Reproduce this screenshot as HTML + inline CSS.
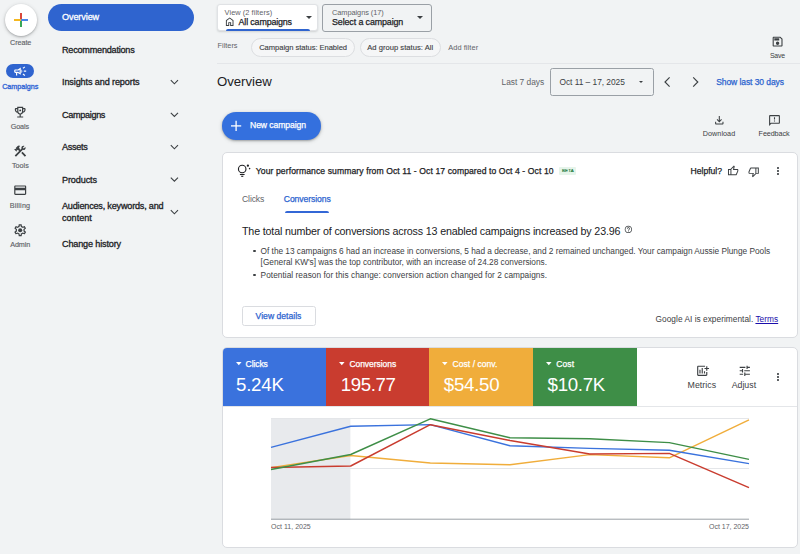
<!DOCTYPE html>
<html><head><meta charset="utf-8">
<style>
*{box-sizing:border-box;margin:0;padding:0}
html,body{width:800px;height:554px;overflow:hidden;background:#f1f3f4;font-family:"Liberation Sans",sans-serif;color:#202124}
body{position:relative}
.abs{position:absolute}
.t{position:absolute;white-space:nowrap;line-height:1}
.m{-webkit-text-stroke:.25px currentColor}
.rl{font-size:7.2px;color:#5f6368;-webkit-text-stroke:.15px #5f6368}
.nav{font-size:9.1px;color:#202124;left:62px;-webkit-text-stroke:.3px currentColor}
svg{position:absolute;overflow:visible}
.ic{fill:#3c4043}
.chip{position:absolute;height:19px;border:1px solid #dcdee1;border-radius:10px;background:#f5f6f7}
.card{position:absolute;background:#fff;border:1px solid #dadce0;border-radius:5px}
.tile{position:absolute;top:348px;height:58px;color:#fff}
.tile .l{position:absolute;top:11.6px;font-size:8.5px;-webkit-text-stroke:.25px #fff;line-height:1;white-space:nowrap}
.tile .v{position:absolute;top:28px;font-size:18.7px;line-height:1;white-space:nowrap}

.car{position:absolute;width:0;height:0;border-left:3px solid transparent;border-right:3px solid transparent;border-top:3px solid #3c4043}
</style></head><body>

<!-- RAIL -->
<div class="abs" style="left:5px;top:3.8px;width:32px;height:32px;border-radius:50%;background:#fff;box-shadow:0 1px 2px rgba(60,64,67,.3),0 1px 4px rgba(60,64,67,.2)"></div>
<svg style="left:13.9px;top:12.7px" width="14" height="14" viewBox="0 0 14 14"><rect x="6" y="0" width="2" height="7" fill="#d9483b"/><rect x="6" y="7" width="2" height="7" fill="#3aa757"/><rect x="0" y="6" width="7" height="2" fill="#f5b820"/><rect x="7" y="6" width="7" height="2" fill="#4a86e8"/></svg>
<div id="r0" class="t rl" style="letter-spacing:-0.046px;left:10px;top:38.5px">Create</div>

<div class="abs" style="left:6.4px;top:64px;width:28px;height:14.4px;border-radius:7.2px;background:#2f64cf"></div>
<svg style="left:13.3px;top:64.2px" width="14.4" height="14.4" viewBox="0 0 24 24"><path fill="#fff" d="M18 11v2h4v-2h-4zm-2 6.61c.96.71 2.21 1.65 3.2 2.39.4-.53.8-1.07 1.2-1.6-.99-.74-2.24-1.68-3.2-2.4-.4.54-.8 1.08-1.2 1.61zM20.400 5.600c-.4-.53-.8-1.07-1.2-1.6-.99.74-2.24 1.680-3.2 2.400.4.53.8 1.070 1.2 1.600.96-.72 2.210-1.650 3.200-2.400zM4 9c-1.1 0-2 .9-2 2v2c0 1.100.9 2 2 2h1v4h2v-4h1l5 3V6L8 9H4zm5.030 1.710L11 9.530v4.940l-1.970-1.180-.48-.29H4v-2h4.550l.48-.29zM15.500 12c0-1.330-.58-2.530-1.500-3.350v6.690c.92-.81 1.500-2.010 1.500-3.340z"/></svg>
<div id="r1" class="t rl" style="letter-spacing:-0.04px;left:2.2px;top:83.2px;color:#3367d6;-webkit-text-stroke:.35px #3367d6">Campaigns</div>

<svg style="left:13.15px;top:104.55px" width="14.4" height="14.4" viewBox="0 0 24 24"><path class="ic" d="M19 5h-2V3H7v2H5c-1.1 0-2 .9-2 2v1c0 2.550 1.920 4.630 4.390 4.940.63 1.500 1.980 2.630 3.610 2.960V19H7v2h10v-2h-4v-3.100c1.630-.33 2.980-1.460 3.610-2.960C19.080 12.630 21 10.550 21 8V7c0-1.100-.9-2-2-2zM5 8V7h2v3.820C5.840 10.400 5 9.300 5 8zm7 6c-1.650 0-3-1.350-3-3V5h6v6c0 1.650-1.350 3-3 3zm7-6c0 1.300-.84 2.400-2 2.820V7h2v1z"/><circle class="ic" cx="12" cy="9" r="1.6"/></svg>
<div id="r2" class="t rl" style="letter-spacing:-0.136px;left:10.8px;top:122.5px">Goals</div>

<svg style="left:13.3px;top:144.05px" width="14.4" height="14.4" viewBox="0 0 24 24"><path class="ic" d="M13.783 15.172l2.121-2.121 5.996 5.996-2.121 2.121zM17.500 10c1.930 0 3.500-1.570 3.500-3.500 0-.58-.16-1.120-.41-1.600l-2.700 2.700-1.490-1.490 2.700-2.700c-.48-.25-1.020-.41-1.600-.41C15.570 3 14 4.570 14 6.500c0 .41.080.8.210 1.160l-1.850 1.850-1.780-1.780.71-.71-1.410-1.410L12 3.490c-1.170-1.170-3.070-1.170-4.240 0L4.220 7.030l1.410 1.410H2.810l-.71.71 3.540 3.540.71-.71V9.150l1.410 1.410.71-.71 1.780 1.780-7.410 7.410 2.120 2.120L16.340 9.790c.36.130.75.210 1.160.210z"/></svg>
<div id="r3" class="t rl" style="letter-spacing:0.024px;left:11.9px;top:161.8px">Tools</div>

<svg style="left:12.95px;top:183.3px" width="14.4" height="14.4" viewBox="0 0 24 24"><path class="ic" d="M20 4H4c-1.110 0-1.990.89-1.990 2L2 18c0 1.110.89 2 2 2h16c1.110 0 2-.89 2-2V6c0-1.110-.89-2-2-2zm0 14H4v-6h16v6zm0-10H4V6h16v2z"/></svg>
<div id="r4" class="t rl" style="letter-spacing:0.202px;left:9.7px;top:201.8px">Billing</div>

<svg style="left:12.95px;top:222.7px" width="14.4" height="14.4" viewBox="0 0 24 24"><path class="ic" d="M19.430 12.980c.04-.32.070-.64.070-.98 0-.34-.03-.66-.07-.98l2.110-1.650c.19-.15.240-.42.120-.64l-2-3.460c-.09-.16-.26-.25-.44-.25-.06 0-.12.010-.17.030l-2.490 1c-.52-.4-1.080-.73-1.690-.98l-.38-2.650C14.460 2.180 14.250 2 14 2h-4c-.25 0-.46.180-.49.420l-.38 2.650c-.61.250-1.170.590-1.690.980l-2.490-1c-.06-.02-.12-.03-.18-.03-.17 0-.34.090-.43.250l-2 3.460c-.13.220-.07.490.12.640l2.110 1.650c-.04.320-.07.650-.07.980 0 .33.030.66.070.98l-2.110 1.650c-.19.150-.24.420-.12.640l2 3.460c.09.160.260.250.440.250.06 0 .12-.01.17-.03l2.490-1c.52.4 1.080.730 1.690.980l.38 2.650c.03.240.240.420.490.420h4c.25 0 .46-.18.490-.42l.38-2.650c.61-.25 1.170-.59 1.690-.98l2.490 1c.06.020.120.030.180.030.17 0 .34-.09.43-.25l2-3.460c.12-.22.070-.49-.12-.64l-2.110-1.650zm-1.980-1.710c.04.310.05.520.05.730 0 .21-.02.43-.05.730l-.14 1.130.89.700 1.080.84-.7 1.210-1.270-.51-1.040-.42-.9.680c-.43.320-.84.560-1.250.730l-1.060.43-.16 1.130-.2 1.350h-1.400l-.19-1.350-.16-1.130-1.060-.43c-.43-.18-.83-.41-1.230-.71l-.91-.7-1.060.43-1.270.51-.7-1.210 1.080-.84.890-.7-.14-1.130c-.03-.31-.05-.54-.05-.74s.02-.43.05-.73l.14-1.130-.89-.7-1.080-.84.700-1.210 1.270.51 1.040.42.900-.68c.43-.32.840-.56 1.250-.73l1.060-.43.160-1.130.2-1.350h1.390l.19 1.350.16 1.130 1.060.43c.43.180.83.410 1.230.710l.91.700 1.060-.43 1.270-.51.700 1.210-1.070.85-.89.700.14 1.130z"/><circle class="ic" cx="12" cy="12" r="3.4"/></svg>
<div id="r5" class="t rl" style="letter-spacing:-0.055px;left:10.2px;top:241.2px">Admin</div>

<!-- NAV -->
<div class="abs" style="left:48px;top:3.5px;width:146px;height:27.6px;border-radius:14px;background:#2f64cf"></div>
<div id="n0" class="t nav" style="letter-spacing:-0.101px;top:13.2px;color:#fff">Overview</div>
<div id="n1" class="t nav" style="letter-spacing:-0.222px;top:45.8px">Recommendations</div>
<div id="n2" class="t nav" style="letter-spacing:-0.119px;top:78.3px">Insights and reports</div>
<div id="n3" class="t nav" style="letter-spacing:-0.322px;top:110.7px">Campaigns</div>
<div id="n4" class="t nav" style="letter-spacing:-0.283px;top:143.1px">Assets</div>
<div id="n5" class="t nav" style="letter-spacing:-0.124px;top:175.5px">Products</div>
<div id="n6" class="t nav" style="letter-spacing:-0.198px;top:202.1px">Audiences, keywords, and</div>
<div id="n7" class="t nav" style="letter-spacing:-0.006px;top:213.9px">content</div>
<div id="n8" class="t nav" style="letter-spacing:-0.155px;top:240px">Change history</div>
<svg style="left:0;top:0" width="200" height="260" viewBox="0 0 200 260" fill="none" stroke="#3c4043" stroke-width="1.1">
 <polyline points="170.8,80.2 174.4,83.8 178,80.2"/>
 <polyline points="170.8,112.8 174.4,116.4 178,112.8"/>
 <polyline points="170.8,145.2 174.4,148.8 178,145.2"/>
 <polyline points="170.8,177.6 174.4,181.2 178,177.6"/>
 <polyline points="170.8,210.2 174.4,213.8 178,210.2"/>
</svg>

<!-- TOP BAR -->
<div class="abs" style="left:216.8px;top:3.8px;width:101.6px;height:27.6px;background:#fff;border:1px solid #e0e2e5;border-radius:3px;box-shadow:0 1px 2px rgba(60,64,67,.18)"></div>
<div class="abs" style="left:225.5px;top:29px;width:84.5px;height:2.4px;background:#2f64cf;border-radius:2px 2px 0 0"></div>
<div id="d0" class="t" style="letter-spacing:0.057px;left:224.6px;top:8.5px;font-size:7.4px;color:#5f6368">View (2 filters)</div>
<svg style="left:224px;top:16.2px" width="11.4" height="11.4" viewBox="0 0 24 24"><path class="ic" d="M6 19h3v-6h6v6h3v-9l-6-4.500L6 10v9zm-2 2V9l8-6 8 6v12h-7v-6h-2v6H4z"/></svg>
<div id="d1" class="t m" style="letter-spacing:-0.15px;left:238.6px;top:18px;font-size:8.9px;color:#202124">All campaigns</div>
<div class="car" style="left:305.6px;top:15.8px"></div>

<div class="abs" style="left:322.4px;top:3.5px;width:109.3px;height:28px;border:1px solid #9aa0a6;border-radius:3px"></div>
<div id="d2" class="t" style="letter-spacing:-0.064px;left:332px;top:8.6px;font-size:7.4px;color:#5f6368">Campaigns (17)</div>
<div id="d3" class="t m" style="letter-spacing:-0.107px;left:332px;top:18px;font-size:8.9px;color:#202124">Select a campaign</div>
<div class="car" style="left:416.8px;top:15.8px"></div>

<div id="f0" class="t" style="letter-spacing:-0.032px;left:217.6px;top:42.2px;font-size:7.4px;color:#5f6368">Filters</div>
<div class="chip" style="left:251.4px;top:37.5px;width:103.2px"></div>
<div id="f1" class="t m" style="-webkit-text-stroke:.12px currentColor;letter-spacing:-0.053px;left:259.2px;top:43.7px;font-size:7.6px;color:#3c4043">Campaign status: Enabled</div>
<div class="chip" style="left:360.1px;top:37.5px;width:80.6px"></div>
<div id="f2" class="t m" style="-webkit-text-stroke:.12px currentColor;letter-spacing:0.028px;left:367.2px;top:43.7px;font-size:7.6px;color:#3c4043">Ad group status: All</div>
<div id="f3" class="t" style="letter-spacing:0.083px;left:448.2px;top:43.9px;font-size:7.4px;color:#5f6368">Add filter</div>
<svg style="left:771.3px;top:34.7px" width="13.2" height="13.2" viewBox="0 0 24 24"><path class="ic" d="M17 3H5c-1.110 0-2 .9-2 2v14c0 1.100.89 2 2 2h14c1.100 0 2-.9 2-2V7l-4-4zm2 16H5V5h11.170L19 7.830V19zm-7-7c-1.660 0-3 1.340-3 3s1.340 3 3 3 3-1.340 3-3-1.340-3-3-3zM6 6h9v4H6z"/></svg>
<div id="f4" class="t" style="letter-spacing:-0.155px;left:769.9px;top:52.5px;font-size:6.9px;color:#3c4043">Save</div>
<div class="abs" style="left:217px;top:62.6px;width:583px;height:1px;background:#e4e6e9"></div>

<div id="o0" class="t" style="letter-spacing:-0.021px;left:217px;top:75.1px;font-size:13.2px;color:#202124">Overview</div>
<div id="o1" class="t" style="letter-spacing:-0.031px;left:501.6px;top:77.8px;font-size:8.4px;color:#5f6368">Last 7 days</div>
<div class="abs" style="left:549.5px;top:68px;width:104px;height:27.8px;border:1px solid #9aa0a6;border-radius:2.5px"></div>
<div id="o2" class="t" style="letter-spacing:-0.028px;left:559.4px;top:77.8px;font-size:8.4px;color:#3c4043">Oct 11 – 17, 2025</div>
<div class="car" style="left:638.5px;top:80.5px;border-left-width:2.8px;border-right-width:2.8px;border-top-width:2.8px"></div>
<svg style="left:0;top:0" width="800" height="100" viewBox="0 0 800 100" fill="none" stroke="#3c4043" stroke-width="1.15">
 <polyline points="669.6,77.4 665,82 669.6,86.6"/>
 <polyline points="693.2,77.4 697.8,82 693.2,86.6"/>
</svg>
<div id="o3" class="t m" style="letter-spacing:-0.07px;left:716.2px;top:77.6px;font-size:8.5px;color:#2b63cf">Show last 30 days</div>

<div class="abs" style="left:221.8px;top:112px;width:99.3px;height:27.7px;border-radius:14px;background:#3470de;box-shadow:0 1px 2px rgba(60,64,67,.35),0 1px 4px rgba(60,64,67,.2)"></div>
<svg style="left:0;top:0" width="800" height="200" viewBox="0 0 800 200" stroke="#fff" stroke-width="1.3"><line x1="231" y1="125.9" x2="241.2" y2="125.9"/><line x1="236.1" y1="120.8" x2="236.1" y2="131"/></svg>
<div id="b0" class="t m" style="letter-spacing:-0.07px;left:250px;top:121.4px;font-size:8.6px;color:#fff">New campaign</div>
<svg style="left:712.8px;top:114.4px" width="12.6" height="12.6" viewBox="0 0 24 24"><path class="ic" d="M12 16l-5-5 1.400-1.450 2.600 2.600V4h2v8.150l2.600-2.600L17 11l-5 5zm-6 4c-.55 0-1.020-.2-1.410-.59C4.200 19.020 4 18.550 4 18v-3h2v3h12v-3h2v3c0 .55-.2 1.020-.59 1.410-.39.39-.86.59-1.410.59H6z"/></svg>
<div id="b1" class="t" style="letter-spacing:0.054px;left:702.8px;top:129.8px;font-size:7.2px;color:#3c4043">Download</div>
<svg style="left:767.6px;top:114.2px" width="13" height="13" viewBox="0 0 24 24"><path class="ic" d="M20 2H4c-1.100 0-1.990.9-1.990 2L2 22l4-4h14c1.100 0 2-.9 2-2V4c0-1.100-.9-2-2-2zm0 14H5.170l-.59.59-.58.58V4h16v12zm-9-4h2v2h-2zm0-6h2v4h-2z"/></svg>
<div id="b2" class="t" style="letter-spacing:-0.097px;left:758.6px;top:129.8px;font-size:7.2px;color:#3c4043">Feedback</div>

<!-- CARD 1 -->
<div class="card" style="left:222px;top:152px;width:576.4px;height:185.5px"></div>
<svg style="left:0;top:0" width="800" height="200" viewBox="0 0 800 200"><circle cx="242.2" cy="169" r="3.75" fill="none" stroke="#202124" stroke-width="1.15"/><line x1="239.9" y1="174.5" x2="244.6" y2="174.5" stroke="#202124" stroke-width="1.1"/><line x1="241.2" y1="176.3" x2="243.3" y2="176.3" stroke="#202124" stroke-width="1.1"/><circle cx="247.9" cy="165.7" r="1.15" fill="#202124"/><circle cx="249.6" cy="168.6" r=".8" fill="#202124"/></svg>
<div id="c0" class="t m" style="letter-spacing:0.09px;left:255.8px;top:166.8px;font-size:8.6px;color:#202124">Your performance summary from Oct 11 - Oct 17 compared to Oct 4 - Oct 10</div>
<div class="abs" style="left:558.8px;top:166.8px;width:17px;height:8.2px;background:#e6f4ea;border-radius:1px"></div>
<div id="c1" class="t" style="letter-spacing:0.161px;left:562px;top:169px;font-size:4.4px;color:#137333;-webkit-text-stroke:.15px #137333">BETA</div>
<div id="c2" class="t m" style="letter-spacing:-0.004px;left:690.5px;top:166.8px;font-size:8.6px;color:#202124">Helpful?</div>
<svg style="left:727.2px;top:164.6px" width="11.8" height="11.8" viewBox="0 0 24 24"><path class="ic" d="M18 21H7V8l7-7 1.250 1.250c.12.12.21.27.29.47.08.2.11.39.11.57v.35L14.550 8H21c.53 0 1 .2 1.400.6.4.4.6.87.6 1.400v2c0 .12-.02.24-.05.38-.03.13-.07.26-.1.37l-3 7.050c-.15.33-.4.62-.75.85-.35.23-.72.35-1.100.35zM9 19h9l3-7v-2h-9l1.350-5.500L9 8.850V19zM7 8v2H4v9h3v2H2V8h5z"/></svg>
<svg style="left:747.6px;top:165.8px" width="11.8" height="11.8" viewBox="0 0 24 24"><path class="ic" transform="rotate(180 12 12)" d="M18 21H7V8l7-7 1.250 1.250c.12.12.21.27.29.47.08.2.11.39.11.57v.35L14.550 8H21c.53 0 1 .2 1.400.6.4.4.6.87.6 1.400v2c0 .12-.02.24-.05.38-.03.13-.07.26-.1.37l-3 7.050c-.15.33-.4.62-.75.85-.35.23-.72.35-1.100.35zM9 19h9l3-7v-2h-9l1.350-5.500L9 8.850V19zM7 8v2H4v9h3v2H2V8h5z"/></svg>
<svg style="left:772.2px;top:164.6px" width="12" height="12" viewBox="0 0 24 24"><path class="ic" d="M12 8c1.100 0 2-.9 2-2s-.9-2-2-2-2 .9-2 2 .9 2 2 2zm0 2c-1.100 0-2 .9-2 2s.9 2 2 2 2-.9 2-2-.9-2-2-2zm0 6c-1.100 0-2 .9-2 2s.9 2 2 2 2-.9 2-2-.9-2-2-2z"/></svg>
<div id="c3" class="t" style="letter-spacing:-0.12px;left:242px;top:195.2px;font-size:8.6px;color:#5f6368">Clicks</div>
<div id="c4" class="t m" style="letter-spacing:-0.088px;left:283.8px;top:195.2px;font-size:8.6px;color:#2b63cf">Conversions</div>
<div class="abs" style="left:285px;top:210.6px;width:44.2px;height:2px;background:#3367d6;border-radius:2px 2px 0 0"></div>
<div id="c5" class="t" style="letter-spacing:-0.162px;left:242px;top:225.8px;font-size:10.7px;color:#202124">The total number of conversions across 13 enabled campaigns increased by 23.96</div>
<svg style="left:624px;top:225.2px" width="8.8" height="8.8" viewBox="0 0 24 24"><path class="ic" d="M11 18h2v-2h-2v2zm1-16C6.480 2 2 6.480 2 12s4.480 10 10 10 10-4.480 10-10S17.520 2 12 2zm0 18c-4.410 0-8-3.590-8-8s3.590-8 8-8 8 3.590 8 8-3.590 8-8 8zm0-14c-2.210 0-4 1.790-4 4h2c0-1.100.9-2 2-2s2 .9 2 2c0 2-3 1.750-3 5h2c0-2.250 3-2.500 3-5 0-2.210-1.790-4-4-4z"/></svg>
<div class="abs" style="left:253.2px;top:249.6px;width:2.6px;height:2.6px;border-radius:50%;background:#3c4043"></div>
<div class="abs" style="left:253.2px;top:273.6px;width:2.6px;height:2.6px;border-radius:50%;background:#3c4043"></div>
<div id="p0" class="t" style="letter-spacing:-0.019px;left:260.6px;top:246.9px;font-size:8.3px;color:#3c4043">Of the 13 campaigns 6 had an increase in conversions, 5 had a decrease, and 2 remained unchanged. Your campaign Aussie Plunge Pools</div>
<div id="p1" class="t" style="letter-spacing:-0.008px;left:260.6px;top:258.2px;font-size:8.3px;color:#3c4043">[General KW's] was the top contributor, with an increase of 24.28 conversions.</div>
<div id="p2" class="t" style="letter-spacing:0.036px;left:260.6px;top:270.8px;font-size:8.3px;color:#3c4043">Potential reason for this change: conversion action changed for 2 campaigns.</div>
<div class="abs" style="left:241.6px;top:305.6px;width:74px;height:20px;border:1px solid #dadce0;border-radius:2.5px"></div>
<div id="p3" class="t m" style="letter-spacing:0.008px;left:255.6px;top:311.8px;font-size:8.6px;color:#2b63cf">View details</div>
<div id="p4" class="t" style="letter-spacing:0.031px;left:655.6px;top:315.2px;font-size:8.3px;color:#3c4043">Google AI is experimental. <span style="color:#1a0dab;text-decoration:underline">Terms</span></div>

<!-- CARD 2 -->
<div class="card" style="left:222px;top:347.4px;width:576.4px;height:200.4px"></div>
<div class="tile" style="left:222.6px;width:103.2px;background:#3a72dd;border-radius:4px 0 0 0"><svg style="left:13.2px;top:14.3px" width="5.6" height="3.2" viewBox="0 0 5.6 3.2"><polygon points="0,0 5.6,0 2.8,3.2" fill="#fff"/></svg><div id="t0" class="l" style="letter-spacing:-0.095px;left:23px">Clicks</div><div id="v0" class="v" style="letter-spacing:-0.229px;left:13.4px">5.24K</div></div>
<div class="tile" style="left:325.8px;width:103.5px;background:#c93c2f"><svg style="left:13.2px;top:14.3px" width="5.6" height="3.2" viewBox="0 0 5.6 3.2"><polygon points="0,0 5.6,0 2.8,3.2" fill="#fff"/></svg><div id="t1" class="l" style="letter-spacing:-0.041px;left:23.6px">Conversions</div><div id="v1" class="v" style="letter-spacing:-0.395px;left:14.9px">195.77</div></div>
<div class="tile" style="left:429.3px;width:103.7px;background:#f0ad3b"><svg style="left:13.2px;top:14.3px" width="5.6" height="3.2" viewBox="0 0 5.6 3.2"><polygon points="0,0 5.6,0 2.8,3.2" fill="#fff"/></svg><div id="t2" class="l" style="letter-spacing:0.062px;left:23.2px">Cost / conv.</div><div id="v2" class="v" style="letter-spacing:-0.262px;left:14.5px">$54.50</div></div>
<div class="tile" style="left:533px;width:104px;background:#3e8e47"><svg style="left:13.2px;top:14.3px" width="5.6" height="3.2" viewBox="0 0 5.6 3.2"><polygon points="0,0 5.6,0 2.8,3.2" fill="#fff"/></svg><div id="t3" class="l" style="letter-spacing:0.129px;left:23.2px">Cost</div><div id="v3" class="v" style="letter-spacing:-0.306px;left:14.6px">$10.7K</div></div>
<div class="abs" style="left:223px;top:405.8px;width:574.4px;height:1px;background:#e4e6e9"></div>
<svg style="left:695.6px;top:363.8px" width="13.6" height="13.6" viewBox="0 0 24 24"><path class="ic" d="M6 9.990h2v7H6zm8 3h2v4h-2zm-4-6h2v10h-2zM20 7V4h-2v3h-3v2h3v3h2V9h3V7zm-2 12H4V5h12V3H4c-1.100 0-2 .9-2 2v14c0 1.100.9 2 2 2h14c1.100 0 2-.9 2-2v-5h-2v5z"/></svg>
<div id="m0" class="t" style="letter-spacing:0.063px;left:687.5px;top:380.8px;font-size:8.8px;color:#3c4043">Metrics</div>
<svg style="left:737.5px;top:363.8px" width="13.6" height="13.6" viewBox="0 0 24 24"><path class="ic" d="M3 17v2h6v-2H3zM3 5v2h10V5H3zm10 16v-2h8v-2h-8v-2h-2v6h2zM7 9v2H3v2h4v2h2V9H7zm14 4v-2H11v2h10zm-6-4h2V7h4V5h-4V3h-2v6z"/></svg>
<div id="m1" class="t" style="letter-spacing:-0.009px;left:731.7px;top:380.8px;font-size:8.8px;color:#3c4043">Adjust</div>
<svg style="left:772.2px;top:371px" width="12" height="12" viewBox="0 0 24 24"><path class="ic" d="M12 8c1.100 0 2-.9 2-2s-.9-2-2-2-2 .9-2 2 .9 2 2 2zm0 2c-1.100 0-2 .9-2 2s.9 2 2 2 2-.9 2-2-.9-2-2-2zm0 6c-1.100 0-2 .9-2 2s.9 2 2 2 2-.9 2-2-.9-2-2-2z"/></svg>

<svg style="left:0;top:0" width="800" height="554" viewBox="0 0 800 554">
 <rect x="271" y="418" width="79.4" height="102" fill="#e8eaed"/>
 <line x1="271" y1="418.5" x2="749" y2="418.5" stroke="#e4e6e9" stroke-width="1"/>
 <line x1="271" y1="468.5" x2="749" y2="468.5" stroke="#e4e6e9" stroke-width="1"/>
 <line x1="271" y1="519.2" x2="749" y2="519.2" stroke="#9aa0a6" stroke-width="1"/>
 <polyline fill="none" stroke="#f0ad3b" stroke-width="1.45" stroke-linejoin="round" points="271,467.6 350.7,455.5 430.3,463 510,464.7 589.7,454.6 669.3,457.8 749,419.8"/>
 <polyline fill="none" stroke="#3a72dd" stroke-width="1.45" stroke-linejoin="round" points="271,447.4 350.7,426.3 430.3,424.6 510,445.8 589.7,448.4 669.3,450.2 749,463.6"/>
 <polyline fill="none" stroke="#c93c2f" stroke-width="1.45" stroke-linejoin="round" points="271,467.5 350.7,466 430.3,424.7 510,440.5 589.7,454 669.3,453.4 749,487.6"/>
 <polyline fill="none" stroke="#3e8e47" stroke-width="1.45" stroke-linejoin="round" points="271,469.5 350.7,454.5 430.3,418.8 510,437.7 589.7,438.7 669.3,442.6 749,459.4"/>
 <text id="x0" style="letter-spacing:0.018px;" x="271" y="529" font-size="7" fill="#5f6368" font-family="Liberation Sans, sans-serif">Oct 11, 2025</text>
 <text id="x1" style="letter-spacing:-0.008px;" x="749" y="529" font-size="7" fill="#5f6368" text-anchor="end" font-family="Liberation Sans, sans-serif">Oct 17, 2025</text>
</svg>
</body></html>
